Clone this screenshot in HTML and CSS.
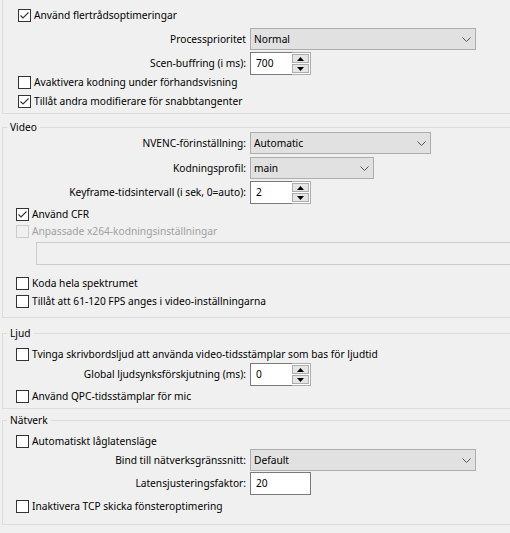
FILE: index.html
```html
<!DOCTYPE html>
<html lang="sv">
<head>
<meta charset="utf-8">
<title>Avancerat</title>
<link rel="stylesheet" href="styles.css">
</head>
<body>
<div class="page">
  <section class="box box-top">
    <div class="cb-row"><span class="cb"><svg viewBox="0 0 11 11" class="tick"><polyline points="1.5,5.5 4,8 9.5,2.5"/></svg></span>Använd flertrådsoptimeringar</div>
    <div class="form-row mt-5"><span class="lbl">Processprioritet</span><div class="combo w-226"><span>Normal</span><svg class="chev" viewBox="0 0 9 5"><polyline points="0.5,0.5 4.5,4.5 8.5,0.5"/></svg></div></div>
    <div class="form-row mt-2"><span class="lbl">Scen-buffring (i ms):</span><div class="spin"><span class="spin-field">700</span><span class="spin-btns"><span class="sbtn"><svg viewBox="0 0 7 4"><polygon points="0,4 3.5,0 7,4"/></svg></span><span class="sbtn"><svg viewBox="0 0 7 4"><polygon points="0,0 3.5,4 7,0"/></svg></span></span></div></div>
    <div class="cb-row"><span class="cb"></span>Avaktivera kodning under förhandsvisning</div>
    <div class="cb-row mt-4"><span class="cb"><svg viewBox="0 0 11 11" class="tick"><polyline points="1.5,5.5 4,8 9.5,2.5"/></svg></span>Tillåt andra modifierare för snabbtangenter</div>
  </section>

  <section class="box box-video">
    <span class="title">Video</span>
    <div class="form-row"><span class="lbl">NVENC-förinställning:</span><div class="combo w-181"><span>Automatic</span><svg class="chev" viewBox="0 0 9 5"><polyline points="0.5,0.5 4.5,4.5 8.5,0.5"/></svg></div></div>
    <div class="form-row mt-3"><span class="lbl">Kodningsprofil:</span><div class="combo w-124"><span>main</span><svg class="chev" viewBox="0 0 9 5"><polyline points="0.5,0.5 4.5,4.5 8.5,0.5"/></svg></div></div>
    <div class="form-row mt-2"><span class="lbl">Keyframe-tidsintervall (i sek, 0=auto):</span><div class="spin"><span class="spin-field">2</span><span class="spin-btns"><span class="sbtn"><svg viewBox="0 0 7 4"><polygon points="0,4 3.5,0 7,4"/></svg></span><span class="sbtn"><svg viewBox="0 0 7 4"><polygon points="0,0 3.5,4 7,0"/></svg></span></span></div></div>
    <div class="cb-row mt-3"><span class="cb"><svg viewBox="0 0 11 11" class="tick"><polyline points="1.5,5.5 4,8 9.5,2.5"/></svg></span>Använd CFR</div>
    <div class="cb-row mt-2 disabled"><span class="cb"></span>Anpassade x264-kodningsinställningar</div>
    <div class="textfield disabled-field mt-3"></div>
    <div class="cb-row mt-11"><span class="cb"></span>Koda hela spektrumet</div>
    <div class="cb-row mt-3"><span class="cb"></span>Tillåt att 61-120 FPS anges i video-inställningarna</div>
  </section>

  <section class="box box-audio">
    <span class="title">Ljud</span>
    <div class="cb-row"><span class="cb"></span>Tvinga skrivbordsljud att använda video-tidsstämplar som bas för ljudtid</div>
    <div class="form-row mt-1"><span class="lbl">Global ljudsynksförskjutning (ms):</span><div class="spin"><span class="spin-field">0</span><span class="spin-btns"><span class="sbtn"><svg viewBox="0 0 7 4"><polygon points="0,4 3.5,0 7,4"/></svg></span><span class="sbtn"><svg viewBox="0 0 7 4"><polygon points="0,0 3.5,4 7,0"/></svg></span></span></div></div>
    <div class="cb-row mt-3"><span class="cb"></span>Använd QPC-tidsstämplar för mic</div>
  </section>

  <section class="box box-net">
    <span class="title">Nätverk</span>
    <div class="cb-row"><span class="cb"></span>Automatiskt låglatensläge</div>
    <div class="form-row"><span class="lbl">Bind till nätverksgränssnitt:</span><div class="combo w-226"><span>Default</span><svg class="chev" viewBox="0 0 9 5"><polyline points="0.5,0.5 4.5,4.5 8.5,0.5"/></svg></div></div>
    <div class="form-row mt-1"><span class="lbl">Latensjusteringsfaktor:</span><div class="lineedit">20</div></div>
    <div class="cb-row mt-4"><span class="cb"></span>Inaktivera TCP skicka fönsteroptimering</div>
  </section>
</div>
</body>
</html>
```

FILE: styles.css
```css
* { box-sizing: border-box; }
html, body { margin: 0; padding: 0; }
body {
  width: 510px;
  height: 533px;
  overflow: hidden;
  background: #f0f0f0;
  color: #000;
  font-family: "Noto Sans", "Open Sans", sans-serif;
  font-size: 10.2px;
  line-height: 15px;
}
.page {
  width: 560px;
  padding-left: 2px;
  display: flex;
  flex-direction: column;
}
.box {
  position: relative;
  display: flex;
  flex-direction: column;
  border: 1px solid #dcdcdc;
  padding-left: 13px;
  --lbl-w: 230px;
}
.box-top {
  border-top: none;
  padding-left: 15px;
  padding-top: 8px;
  padding-bottom: 4px;
  --lbl-w: 228px;
}
.box-video { margin-top: 13px; padding-top: 4px; padding-bottom: 8px; }
.box-audio { margin-top: 15px; padding-top: 13px; padding-bottom: 4px; }
.box-net { margin-top: 11px; padding-top: 13px; padding-bottom: 10px; }

.title {
  position: absolute;
  left: 4px;
  top: -8px;
  padding: 0 3px;
  background: #f0f0f0;
  line-height: 15px;
}

.mt-1 { margin-top: 1px; }
.mt-2 { margin-top: 2px; }
.mt-3 { margin-top: 3px; }
.mt-4 { margin-top: 4px; }
.mt-5 { margin-top: 5px; }
.mt-11 { margin-top: 11px; }

.cb-row {
  display: flex;
  align-items: center;
  height: 15px;
  gap: 3px;
  white-space: nowrap;
}
.cb {
  width: 13px;
  height: 13px;
  flex: none;
  border: 1px solid #333;
  background: #fff;
  display: flex;
}
.tick { width: 11px; height: 11px; }
.tick polyline { fill: none; stroke: #333; stroke-width: 1.1; }
.disabled { color: #a0a0a0; }
.disabled .cb { border-color: #cccccc; background: #f0f0f0; }

.form-row {
  display: flex;
  align-items: center;
  gap: 4px;
  white-space: nowrap;
}
.lbl {
  width: var(--lbl-w);
  flex: none;
  text-align: right;
}
.combo {
  height: 22px;
  display: flex;
  align-items: center;
  justify-content: space-between;
  background: #e1e1e1;
  border: 1px solid #adadad;
  padding: 0 4px 0 3px;
}
.w-226 { width: 226px; }
.w-181 { width: 181px; }
.w-124 { width: 124px; }
.chev { width: 9px; height: 5px; }
.chev polyline { fill: none; stroke: #555; stroke-width: 1; }

.spin {
  width: 61px;
  height: 23px;
  display: flex;
}
.spin-field {
  flex: 1;
  background: #fff;
  border: 1px solid #7a7a7a;
  border-right: none;
  padding-left: 5px;
  display: flex;
  align-items: center;
}
.spin-btns {
  width: 19px;
  display: flex;
  flex-direction: column;
  border: 1px solid #adadad;
  border-left: none;
  background: #fff;
  padding: 1px 1px 1px 0;
  gap: 1px;
}
.sbtn {
  flex: 1;
  background: #e5e5e5;
  border: 1px solid #adadad;
  display: flex;
  align-items: center;
  justify-content: center;
}
.sbtn svg { width: 7px; height: 4px; fill: #000; }

.lineedit {
  width: 61px;
  height: 23px;
  background: #fff;
  border: 1px solid #7a7a7a;
  padding-left: 5px;
  display: flex;
  align-items: center;
}
.textfield {
  margin-left: 20px;
  width: 530px;
  height: 23px;
}
.disabled-field {
  background: #f0f0f0;
  border: 1px solid #cccccc;
}
```
